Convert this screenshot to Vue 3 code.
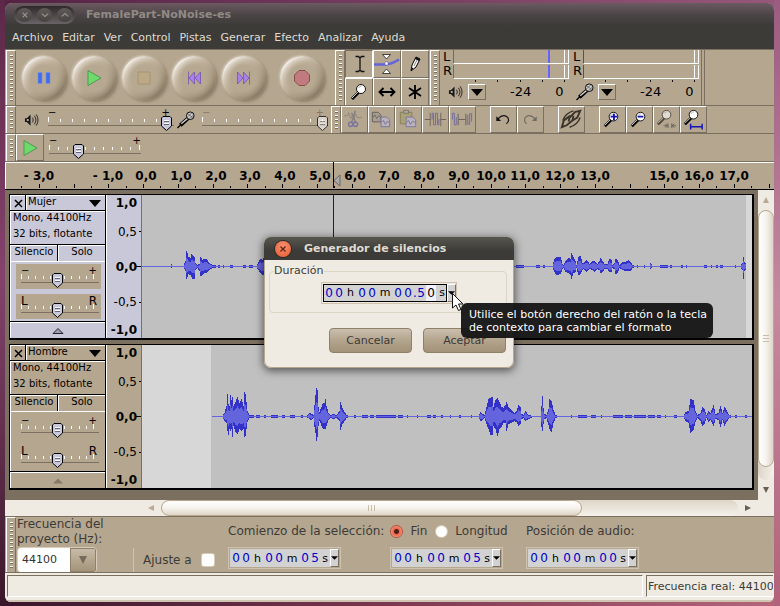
<script setup>
import { ref } from 'vue'

const menus = ['Archivo', 'Editar', 'Ver', 'Control', 'Pistas', 'Generar', 'Efecto', 'Analizar', 'Ayuda']

const meters = [
  { id: 'out', side: 'green', peak: true, label: 'Nivel de reproducción' },
  { id: 'in', side: 'red', peak: false, label: 'Nivel de grabación' }
]

const rulerLabels = [
  [-3, '- 3,0'], [-1, '- 1,0'], [0, '0,0'], [1, '1,0'], [2, '2,0'], [3, '3,0'], [4, '4,0'], [5, '5,0'],
  [6, '6,0'], [7, '7,0'], [8, '8,0'], [9, '9,0'], [10, '10,0'], [11, '11,0'], [12, '12,0'], [13, '13,0'],
  [15, '15,0'], [16, '16,0'], [17, '17,0']
]
const secondX = (s) => 138 + Math.round(s * 34.75)
const majors = Array.from({ length: 22 }, (_, i) => i - 3)

// Envelope keys: x, height above the axis, height below it
const mujer = [
  [142, 0, 0], [170, 0, 0], [171, 2, 1], [172, 0, 0], [183, 0, 0], [185, 5, 4], [186, 15, 12], [187, 13, 10], [188, 9, 7], [190, 8, 8],
  [191, 12, 10], [192, 11, 12], [194, 9, 12], [195, 3, 3], [197, 1, 1], [199, 2, 4], [200, 9, 9], [202, 6, 8],
  [204, 7, 6], [206, 7, 6], [208, 4, 4], [210, 2, 2], [213, 1, 1], [216, 0, 0], [256, 0, 0], [258, 4, 3],
  [260, 7, 6], [262, 6, 8], [264, 9, 7], [270, 3, 3], [552, 0, 0], [554, 7, 5], [556, 9, 8], [560, 9, 7],
  [562, 2, 2], [563, 1, 1], [565, 5, 5], [568, 8, 6], [570, 7, 8], [571, 13, 12], [573, 9, 6], [575, 5, 5],
  [576, 1, 1], [578, 9, 8], [580, 10, 7], [582, 3, 3], [583, 3, 2], [586, 6, 5], [588, 4, 3], [589, 2, 2],
  [592, 5, 3], [594, 5, 5], [597, 2, 2], [599, 5, 3], [600, 8, 6], [602, 5, 5], [604, 2, 2], [607, 2, 2],
  [609, 7, 5], [611, 6, 5], [612, 1, 1], [614, 3, 2], [615, 7, 7], [617, 6, 6], [619, 1, 1], [622, 4, 3],
  [625, 4, 4], [628, 6, 4], [630, 4, 4], [632, 1, 1], [635, 0, 0], [649, 0, 0], [650, 3, 2], [652, 0, 0],
  [740, 0, 0], [742, 3, 3], [743, 9, 12], [744, 4, 4], [746, 2, 2]
]
const hombre = [
  [212, 0, 0], [222, 0, 0], [224, 3, 4], [226, 10, 6], [227, 22, 14], [228, 12, 18], [229, 10, 12], [230, 21, 14],
  [231, 16, 12], [232, 19, 20], [233, 10, 9], [235, 14, 15], [237, 19, 17], [239, 13, 12], [241, 17, 14],
  [243, 10, 12], [244, 24, 20], [245, 22, 19], [246, 14, 12], [247, 5, 5], [249, 1, 1], [252, 1, 1], [254, 0, 0],
  [306, 0, 0], [309, 3, 2], [311, 2, 3], [313, 1, 1], [314, 11, 10], [315, 21, 16], [316, 28, 24], [317, 26, 20],
  [318, 9, 9], [319, 4, 4], [322, 12, 11], [324, 13, 12], [325, 17, 12], [326, 10, 9], [328, 3, 3], [330, 1, 1],
  [333, 2, 2], [336, 1, 1], [339, 5, 4], [340, 14, 13], [342, 8, 7], [344, 4, 4], [346, 1, 1], [349, 0, 0],
  [478, 0, 0], [480, 4, 4], [482, 2, 3], [484, 1, 1], [486, 9, 7], [488, 17, 12], [490, 18, 18], [492, 19, 18],
  [493, 9, 9], [495, 16, 12], [497, 18, 19], [499, 14, 12], [501, 9, 10], [503, 8, 6], [505, 11, 6], [506, 14, 14],
  [508, 9, 7], [511, 6, 6], [514, 3, 4], [516, 5, 5], [518, 11, 9], [520, 9, 7], [521, 2, 2], [523, 1, 1],
  [525, 5, 4], [528, 1, 2], [532, 0, 0], [540, 0, 0], [541, 10, 10], [542, 20, 14], [543, 8, 7], [544, 2, 2],
  [546, 1, 1], [548, 7, 8], [549, 17, 12], [551, 15, 15], [553, 6, 6], [555, 1, 1], [558, 0, 0], [683, 0, 0],
  [685, 4, 4], [688, 5, 6], [690, 17, 16], [693, 16, 13], [695, 5, 5], [697, 1, 1], [700, 3, 4], [702, 9, 9],
  [704, 7, 7], [706, 1, 1], [708, 5, 5], [710, 3, 3], [713, 11, 9], [715, 2, 2], [718, 3, 3], [720, 10, 10],
  [722, 3, 3], [724, 9, 9], [726, 6, 5], [728, 2, 2], [731, 0, 0], [752, 0, 0]
]
const mujerNoise = [[212, 4], [218, 2], [223, 1], [230, 3], [243, 3], [249, 4], [516, 8], [536, 4], [543, 2], [637, 1], [644, 1], [660, 8], [670, 2], [681, 2], [686, 1], [704, 3], [711, 1], [716, 2], [720, 3], [735, 1]]
const hombreNoise = [[256, 4], [264, 2], [271, 7], [282, 3], [290, 5], [301, 2], [354, 2], [362, 6], [370, 4], [376, 20], [398, 5], [407, 1], [417, 1], [427, 4], [433, 3], [441, 2], [450, 1], [459, 2], [471, 1], [571, 1], [578, 9], [591, 5], [601, 1], [613, 10], [625, 7], [634, 12], [648, 7], [657, 4], [665, 1], [674, 3], [735, 2], [745, 2]]

function envelope(keys, scale) {
  const up = []
  const down = []
  for (let k = 0; k < keys.length - 1; k++) {
    const [x0, a0, b0] = keys[k]
    const [x1, a1, b1] = keys[k + 1]
    for (let x = x0; x < x1; x++) {
      const t = (x - x0) / (x1 - x0)
      const a = Math.round((a0 + (a1 - a0) * t) * scale)
      const b = Math.round((b0 + (b1 - b0) * t) * scale)
      up.push(`${x},${71 - a} ${x + 1},${71 - a}`)
      down.unshift(`${x + 1},${72 + b} ${x},${72 + b}`)
    }
  }
  return [...up, ...down].join(' ')
}

const tracks = [
  { name: 'Mujer', selected: true, keys: mujer, noise: mujerNoise, from: 142, to: 746, cursor: 333 },
  { name: 'Hombre', selected: false, keys: hombre, noise: hombreNoise, from: 211, to: 752, cursor: null }
]

const kindOf = (c) => (/\d/.test(c) ? 'digit' : c === '.' ? 'dot' : `unit unit-${c}`)
const clock = (value) => [...value].map((c) => ({ c, kind: kindOf(c) }))
const start = clock('00h00m05s')
const end = clock('00h00m05s')
const audio = clock('00h00m00s')
const silence = clock('00h00m00.50s')

const rate = ref('44100')
const mode = ref('fin')
const snap = ref(false)
const vol = ref(98)
const rec = ref(100)
const speed = ref(30)
</script>

<template>
  <div class="desktop">
    <svg class="defs" aria-hidden="true">
      <symbol id="speaker" viewBox="0 0 16 14">
        <path d="M1 5h2l4-4v12l-4-4h-2z" fill="#1a1a1a" />
        <path d="M3 6h2v2h-2z" fill="#aaa" />
        <path d="M9 4.500q2 2.500 0 5M11 2.500q3.500 4.500 0 9M13 1q4 6 0 12" fill="none" stroke="#222" />
      </symbol>
      <symbol id="mic" viewBox="0 0 20 19">
        <path d="M1 18l4-4" stroke="#000" stroke-width="1.300" />
        <path d="M4 15L13 7" stroke="#000" stroke-width="4" />
        <path d="M5 13.500L12 7.500" stroke="#ccc" stroke-width="1.500" />
        <circle cx="14.500" cy="5" r="4" fill="#ccc" stroke="#000" />
        <path d="M12 3l5 4M12 6l4-4M14 8l4-4" stroke="#555" stroke-width=".8" />
      </symbol>
      <symbol id="lens" viewBox="0 0 20 20">
        <path d="M3 17l7-7" stroke="#000" stroke-width="3" />
        <path d="M3 16l6-6" stroke="#ccc" stroke-width="1" />
        <circle cx="12" cy="7" r="4.500" fill="#fff" stroke="#111" />
        <path d="M9.500 6q1-2 3-2" fill="none" stroke="#999" stroke-width=".8" />
      </symbol>
    </svg>

    <div class="window">
      <header class="titlebar">
        <div class="winbtns">
          <button aria-label="Cerrar"><svg viewBox="0 0 15 15"><path d="M5 5l5 5M10 5l-5 5" /></svg></button>
          <button aria-label="Minimizar"><svg viewBox="0 0 15 15"><path d="M4 6l3.500 3 3.500-3" /></svg></button>
          <button aria-label="Maximizar"><svg viewBox="0 0 15 15"><path d="M4 9l3.500-3 3.500 3" /></svg></button>
        </div>
        <h1>FemalePart-NoNoise-es</h1>
      </header>

      <nav class="menubar">
        <a v-for="m in menus" :key="m" href="#">{{ m }}</a>
      </nav>

      <div class="toolrow row-a">
        <div class="grip"><i></i></div>
        <div class="transport">
          <button aria-label="Pausa"><svg viewBox="0 0 20 20"><path d="M4 4.500h4v11h-4zM12 4.500h4v11h-4z" fill="#3c6cf0" stroke="#7d90d8" stroke-width=".6" /></svg></button>
          <button aria-label="Reproducir"><svg viewBox="0 0 20 20"><path d="M4 2.500v15l13-7.500z" fill="#6cdb6c" stroke="#4a8a4a" stroke-width=".8" /></svg></button>
          <button aria-label="Detener"><svg viewBox="0 0 20 20"><path d="M4 4h12v12h-12z" fill="#bba985" stroke="#a79672" /></svg></button>
          <button aria-label="Ir al inicio"><svg viewBox="0 0 20 20"><path d="M4.500 3.500v13M10.500 4v12l-5.500-6zM16.500 4v12l-5.500-6z" fill="#ab80ea" stroke="#7353b0" stroke-width=".8" /></svg></button>
          <button aria-label="Ir al final"><svg viewBox="0 0 20 20"><path d="M15.500 3.500v13M3.500 4v12l5.500-6zM9.500 4v12l5.500-6z" fill="#ab80ea" stroke="#7353b0" stroke-width=".8" /></svg></button>
          <button class="record" aria-label="Grabar"><svg viewBox="0 0 20 20"><path d="M7 2.500h6l4.500 4.500v6l-4.500 4.500h-6l-4.500-4.500v-6z" fill="#c17b7e" stroke="#8a4d4f" stroke-linejoin="round" /></svg></button>
        </div>
        <div class="grip"><i></i></div>
        <div class="tools">
          <button class="pressed" aria-label="Selección"><svg viewBox="0 0 26 26"><path d="M9.500 5.500h3l1.500 1.500 1.500-1.500h3M9.500 20.500h3l1.500-1.500 1.500 1.500h3M14 7v12" fill="none" stroke="#111" stroke-width="1.300" /></svg></button>
          <button aria-label="Envolvente"><svg viewBox="0 0 26 26"><path d="M0 13.500h11q6 0 14-5" fill="none" stroke="#6464dc" stroke-width="2.500" /><path d="M8.500 3.500h8l-4 4.500zM8.500 22.500h8l-4-4.500z" fill="#fff" stroke="#222" stroke-width=".8" /><path d="M11 11h3v3h-3z" fill="#fff" stroke="#55c" stroke-width=".5" /></svg></button>
          <button aria-label="Dibujo"><svg viewBox="0 0 26 26"><path d="M9 20l1-6 4-8 4 2-4 8z" fill="#fff" stroke="#000" /><path d="M9 20l.5-4 2 1.500zM14 6l4 2-1 2-4-2z" fill="#111" /><path d="M12 15l3-6" stroke="#888" /></svg></button>
          <button aria-label="Ampliación"><svg viewBox="0 0 26 26"><use href="#lens" x="3" y="3" width="20" height="20" /></svg></button>
          <button aria-label="Desplazamiento"><svg viewBox="0 0 26 26"><path d="M6 13h14M9.500 9l-4 4 4 4M16.500 9l4 4-4 4" fill="none" stroke="#000" stroke-width="1.800" /></svg></button>
          <button aria-label="Multiherramienta"><svg viewBox="0 0 26 26"><path d="M13 6v14M7 9l12 8M19 9l-12 8" stroke="#000" stroke-width="1.800" /></svg></button>
        </div>
        <div class="grip"><i></i></div>
        <div class="meters">
          <div v-for="m in meters" :key="m.id" class="meter" role="img" :aria-label="m.label">
            <div class="lr"><span>L</span><span>R</span></div>
            <div class="bars">
              <div v-for="c in 2" :key="c" class="bar" :class="m.side"><b v-if="m.peak"></b></div>
              <svg class="db"><path d="M22.500 0v4M44.500 0v2M67.500 0v4M89.500 0v2M111.500 0v4" stroke="#111" /></svg>
            </div>
            <div class="scale">
              <svg v-if="m.peak" class="ic-spk"><use href="#speaker" /></svg>
              <svg v-else class="ic-mic"><use href="#mic" /></svg>
              <button class="drop" :aria-label="m.label"><svg viewBox="0 0 12 7"><path d="M0 0h12l-6 7z" /></svg></button>
              <span class="m24">-24</span><span>0</span>
            </div>
          </div>
        </div>
      </div>

      <div class="toolrow row-b">
        <div class="grip"><i></i></div>
        <div class="mixer">
          <svg class="ic-spk"><use href="#speaker" /></svg>
          <label class="slider long">
            <span class="ends"><b>−</b><b>+</b></span>
            <svg class="ticks"><rect v-for="t in 11" :key="t" :x="(t - 1) * 12" :y="t === 1 ? 0 : 2" width="1" :height="t === 1 ? 5 : 3" /></svg>
            <input v-model="vol" type="range" aria-label="Volumen de salida">
          </label>
          <svg class="ic-mic"><use href="#mic" /></svg>
          <label class="slider long off">
            <span class="ends"><b>−</b><b>+</b></span>
            <svg class="ticks"><rect v-for="t in 11" :key="t" :x="(t - 1) * 12" :y="t === 1 ? 0 : 2" width="1" :height="t === 1 ? 5 : 3" /></svg>
            <input v-model="rec" type="range" aria-label="Volumen de entrada" disabled>
          </label>
        </div>
        <div class="grip"><i></i></div>
        <div class="edits">
          <button class="dim" aria-label="Cortar"><svg viewBox="0 0 26 26"><path d="M2 9h4l1-3 2 6 2-4 2 4 1-5 2 4h5" fill="none" stroke="#777" /><path d="M14 4l-4 12M10 6l4 10" stroke="#667" stroke-width="1.500" /><circle cx="9" cy="18" r="2.200" fill="none" stroke="#55a" stroke-width="1.500" /><circle cx="14" cy="18" r="2.200" fill="none" stroke="#55a" stroke-width="1.500" /></svg></button>
          <button class="dim" aria-label="Copiar"><svg viewBox="0 0 26 26"><path d="M3.500 5.500h6l3 3v7h-9z" fill="#999" stroke="#333" /><path d="M4 11l2-3 2 4 2-3 2 2" fill="none" stroke="#444" /><path d="M12.500 10.500h6l3 3v7h-9z" fill="#bcbcd6" stroke="#55a" /><path d="M13 16l2-2 2 4 2-3 2 1" fill="none" stroke="#55a" /></svg></button>
          <button class="dim" aria-label="Pegar"><svg viewBox="0 0 26 26"><path d="M4.500 5.500h12v12h-12z" fill="#a3a166" stroke="#66663a" /><path d="M8 3.500h5v3h-5z" fill="#aaa" stroke="#555" /><path d="M10.500 10.500h7l3 3v7h-10z" fill="#bcbcd6" stroke="#55a" /><path d="M11 16l2-2 2 4 2-3 3 1" fill="none" stroke="#55a" /></svg></button>
          <button class="dim" aria-label="Recortar"><svg viewBox="0 0 26 26"><path d="M2 13h6M18 13h6" stroke="#333" /><path d="M7.500 6v14M18.500 6v14" stroke="#444" /><path d="M9.500 13v-6.500h1.500v12h2v-12h2v12h1.500v-6" fill="none" stroke="#44a" /></svg></button>
          <button class="dim" aria-label="Silenciar"><svg viewBox="0 0 26 26"><path d="M8.500 7v12M16.500 7v12M9 13h7" stroke="#333" fill="none" /><path d="M2.500 13v-6.500h2v12h2v-8M18.500 8v10h2v-11h2v8" fill="none" stroke="#44a" /></svg></button>
          <button class="gap" aria-label="Deshacer"><svg viewBox="0 0 26 26"><path d="M7 12.500q6-6 10.500-1.500 2 4-1.500 6.500" fill="none" stroke="#111" stroke-width="1.200" /><path d="M5.500 9.500v5h5z" fill="#111" /></svg></button>
          <button class="dim" aria-label="Rehacer"><svg viewBox="0 0 26 26"><path d="M18 12.500q-6-6-10.500-1.500-2 4 1.500 6.500" fill="none" stroke="#444" stroke-width="1.200" /><path d="M19.500 9.500v5h-5z" fill="#444" /></svg></button>
          <button class="gap" aria-label="Enlazar pistas"><svg viewBox="0 0 26 26"><g fill="none" stroke="#3b342b" stroke-width="2"><path d="M14 14l5-3 3-7-5 1-6 6-1 4" /><path d="M15 10l-1 5-6 5-5 2 2-7 7-5" transform="translate(0 -1)" /><path d="M4 14q3-8 11-10M22 11q-3 8-11 10" stroke-width="1.500" /></g></svg></button>
          <button class="gap" aria-label="Acercar"><svg viewBox="0 0 26 26"><use href="#lens" x="2" y="3" width="20" height="20" /><path d="M11 10h7M14.500 7v7" stroke="#1414b4" stroke-width="2" /></svg></button>
          <button aria-label="Alejar"><svg viewBox="0 0 26 26"><use href="#lens" x="2" y="3" width="20" height="20" /><path d="M11 10h6" stroke="#1414b4" stroke-width="2" /></svg></button>
          <button class="dim" aria-label="Ajustar selección"><svg viewBox="0 0 26 26"><use href="#lens" x="1" y="1" width="20" height="20" /><path d="M10 19.500h4.500M18.500 19.500h4.500M14.500 17v5M18.500 17v5M12 17.500l2 2-2 2M21 17.500l-2 2 2 2" fill="none" stroke="#333" /></svg></button>
          <button aria-label="Ajustar proyecto"><svg viewBox="0 0 26 26"><use href="#lens" x="1" y="1" width="20" height="20" /><path d="M10 20.500h12M10 17.500v6M22 17.500v6" stroke="#1414b4" stroke-width="1.500" /></svg></button>
        </div>
      </div>

      <div class="toolrow row-c">
        <div class="grip"><i></i></div>
        <button class="playspeed" aria-label="Reproducir a velocidad"><svg viewBox="0 0 20 20"><path d="M4 2.500v15l13-7.500z" fill="#6cdb6c" stroke="#4a8a4a" stroke-width=".8" /></svg></button>
        <label class="slider speed">
          <span class="ends"><b>−</b><b>+</b></span>
          <svg class="ticks"><rect v-for="t in 11" :key="t" :x="(t - 1) * 9" :y="t === 1 || t === 11 ? 0 : 2" width="1" :height="t === 1 || t === 11 ? 5 : 3" /></svg>
          <input v-model="speed" type="range" aria-label="Velocidad de reproducción">
        </label>
      </div>

      <div class="ruler">
        <svg>
          <g fill="#000">
            <rect v-for="n in majors" :key="n" :x="secondX(n)" y="22" width="1" height="4" />
            <rect v-for="n in majors" :key="'h' + n" :x="secondX(n - 0.5)" y="24" width="1" height="2" />
          </g>
          <text v-for="l in rulerLabels" :key="l[1]" :x="secondX(l[0]) + (l[0] < 0 || l[0] > 9 ? 0 : 3)" y="18">{{ l[1] }}</text>
          <path d="M328.500 0v26" stroke="#000" />
          <path d="M335 13v11l-6-5.500z" fill="#aaa" stroke="#666" />
        </svg>
      </div>

      <main class="work">
        <div class="canvas">
          <section v-for="t in tracks" :key="t.name" class="track" :class="{ selected: t.selected }">
            <div class="panel">
              <div class="prow head">
                <button class="cell x" aria-label="Cerrar pista"><svg viewBox="0 0 9 9"><path d="M1 1l7 7M8 1l-7 7" stroke="#000" stroke-width="1.500" /></svg></button>
                <button class="cell name">{{ t.name }}<svg viewBox="0 0 12 7"><path d="M0 0h12l-6 7z" /></svg></button>
              </div>
              <div class="cell info"><span>Mono, 44100Hz</span><span>32 bits, flotante</span></div>
              <div class="prow mute">
                <button class="cell">Silencio</button>
                <button class="cell">Solo</button>
              </div>
              <div class="cell knobs">
                <label v-for="k in ['gain', 'pan']" :key="k" class="slider small" :class="k">
                  <span class="ends"><b>{{ k === 'gain' ? '−' : 'L' }}</b><b>{{ k === 'gain' ? '+' : 'R' }}</b></span>
                  <svg class="ticks"><rect v-for="n in 11" :key="n" :x="Math.round((n - 1) * 7.2)" :y="n === 1 || n === 11 ? 0 : 2" width="1" :height="n === 1 || n === 11 ? 5 : 3" /></svg>
                  <input type="range" value="48" :aria-label="(k === 'gain' ? 'Ganancia ' : 'Balance ') + t.name">
                </label>
              </div>
              <button class="cell fold" aria-label="Contraer"><svg viewBox="0 0 12 6"><path d="M1 5.500h10l-5-5z" /></svg></button>
            </div>
            <div class="vruler">
              <b>1,0</b><span>0,5</span><b>0,0</b><span>-0,5</span><b>-1,0</b>
              <svg viewBox="0 0 5 143"><path d="M3 36.500h2M0 71.500h5M3 107.500h2" stroke="#000" /></svg>
            </div>
            <svg class="wave" viewBox="142 0 610 143" preserveAspectRatio="none" shape-rendering="crispEdges">
              <rect x="142" width="610" height="143" fill="#d7d7d7" />
              <rect :x="t.from" :width="t.to - t.from" height="143" fill="#c0c0c0" />
              <polygon :points="envelope(t.keys, 1)" fill="#3232c8" />
              <rect v-for="(n, i) in t.noise" :key="i" :x="n[0]" y="70" :width="n[1]" height="3" fill="#3232c8" />
              <polygon :points="envelope(t.keys.map(([x, a, b]) => [x, a > 1 ? a : -1, b > 1 ? b : -1]), 0.5)" fill="#6464dc" />
              <rect v-if="t.cursor" :x="t.cursor" width="1" height="143" fill="#222" />
            </svg>
          </section>
        </div>
        <div class="vscroll">
          <svg viewBox="0 0 8 8"><path d="M4 1l3 6h-6z" fill="#b8aa94" /></svg>
          <div class="trough"><div class="thumb"><i></i></div></div>
          <svg viewBox="0 0 8 8"><path d="M4 7l3-6h-6z" fill="#666055" /></svg>
        </div>
      </main>

      <div class="hscroll">
        <svg viewBox="0 0 8 8"><path d="M1 4l6-3v6z" fill="#b8aa94" /></svg>
        <div class="trough"><div class="thumb"><i></i></div></div>
        <svg viewBox="0 0 8 8"><path d="M7 4l-6-3v6z" fill="#666055" /></svg>
      </div>

      <div class="selbar">
        <div class="grip"><i></i></div>
        <div class="rate">
          <label for="rate">Frecuencia del proyecto (Hz):</label>
          <div class="combo">
            <select id="rate" v-model="rate"><option>44100</option></select>
            <span class="comboarrow"><svg viewBox="0 0 8 8"><path d="M0 0h8l-4 8z" fill="#756b5c" /></svg></span>
          </div>
        </div>
        <div class="snap"><label for="snap">Ajuste a</label><input id="snap" v-model="snap" type="checkbox"></div>
        <div class="range">
          <div class="rangelabels">
            <span>Comienzo de la selección:</span>
            <label><input v-model="mode" type="radio" name="mode" value="fin">Fin</label>
            <label><input v-model="mode" type="radio" name="mode" value="len">Longitud</label>
          </div>
          <div class="times">
            <div v-for="(v, i) in [start, end]" :key="i" class="time" role="group" :aria-label="i ? 'Fin' : 'Comienzo'">
              <span class="field"><span v-for="(p, j) in v" :key="j" :class="p.kind">{{ p.c }}</span></span>
              <button class="tdrop" aria-label="Formato"><svg viewBox="0 0 8 4"><path d="M0 0h8l-4 4z" /></svg></button>
            </div>
          </div>
        </div>
        <div class="audio">
          <span class="alabel">Posición de audio:</span>
          <div class="time" role="group" aria-label="Posición de audio">
            <span class="field"><span v-for="(p, j) in audio" :key="j" :class="p.kind">{{ p.c }}</span></span>
            <button class="tdrop" aria-label="Formato"><svg viewBox="0 0 8 4"><path d="M0 0h8l-4 4z" /></svg></button>
          </div>
        </div>
      </div>

      <footer class="status">
        <div class="scell"></div>
        <div class="scell real">Frecuencia real: 44100</div>
      </footer>
    </div>

    <div class="dialog" role="dialog" aria-labelledby="dlg-title">
      <header>
        <button aria-label="Cerrar"><svg viewBox="0 0 16 16"><path d="M5.500 5.500l5 5M10.500 5.500l-5 5" stroke="#5b2514" stroke-width="1.300" /></svg></button>
        <h2 id="dlg-title">Generador de silencios</h2>
      </header>
      <fieldset>
        <legend>Duración</legend>
        <div class="time wide">
          <span class="field"><span v-for="(p, j) in silence" :key="j" :class="[p.kind, { focus: j === 10 }]">{{ p.c }}</span></span>
          <button class="tdrop" aria-label="Formato"><svg viewBox="0 0 8 4"><path d="M0 0h8l-4 4z" /></svg></button>
        </div>
      </fieldset>
      <div class="actions">
        <button>Cancelar</button>
        <button>Aceptar</button>
      </div>
      <div class="tip" role="tooltip">Utilice el botón derecho del ratón o la tecla<br>de contexto para cambiar el formato</div>
      <svg class="pointer" viewBox="0 0 13 20"><path d="M1.500 1.500v14.500l3.500-3 2.500 5.500 2.500-1-2.500-5.500h4.500z" fill="#fff" stroke="#111" /></svg>
    </div>
  </div>
</template>

<style>
body { margin: 0; }
* { box-sizing: border-box; }
</style>

<style scoped>
.desktop {
  --tan: #b5a68f;
  --dark: #7b7060;
  --cream: #efebe3;
  position: relative;
  min-height: 100vh;
  padding: 3px 6px 4px 5px;
  display: flex;
  flex-direction: column;
  overflow: hidden;
  font: 11px/14px "DejaVu Sans", sans-serif;
  color: #3c3b37;
  background:
    linear-gradient(180deg, #9a5c80, #c48aa0 50%, #b0637a) right / 6px 100% no-repeat,
    linear-gradient(180deg, #5c2848, #84426c 45%, #6b3556 65%, #3a1728) left / 5px 100% no-repeat,
    linear-gradient(90deg, #552244, #96587a) top / 100% 50% no-repeat,
    linear-gradient(90deg, #38152b, #7c3850 50%, #b5667a) bottom / 100% 50% no-repeat;
}
button { font: inherit; color: inherit; padding: 0; margin: 0; border: 0; background: none; display: grid; place-items: center; }
svg { display: block; }
.defs { position: absolute; width: 0; height: 0; }
.window { flex: 1; display: flex; flex-direction: column; min-width: 0; border-radius: 7px 7px 6px 6px; overflow: hidden; background: var(--tan); }

.titlebar { height: 23px; display: flex; align-items: center; gap: 11px; padding-left: 9px; background: linear-gradient(#6b5a60, #4a4446 55%, #3c3b37); }
.winbtns { display: flex; gap: 5px; padding: 2px 3px; border-radius: 10px; background: linear-gradient(#2f292a, #6a6365); }
.winbtns button { width: 15px; height: 14px; border-radius: 50%; background: linear-gradient(#5f5a59, #474341); }
.winbtns svg { width: 14px; height: 14px; fill: none; stroke: #98928c; stroke-width: 1.3; }
h1, h2 { margin: 0; font-size: 11px; line-height: 14px; font-weight: bold; }
h1 { color: #908a85; }
.menubar { height: 23px; display: flex; align-items: center; gap: 9px; padding-left: 7px; background: #3c3b37; }
.menubar a { color: #dfdbd2; text-decoration: none; }

.toolrow { display: flex; border-top: 1px solid var(--dark); overflow: hidden; flex: none; }
.row-a { height: 56px; }
.row-b, .row-c { height: 28px; }
.grip { width: 10px; flex: none; padding: 4px 2px 4px 3px; border: 1px solid #fff; border-right-color: var(--dark); border-bottom: 0; margin-left: 1px; }
.grip i { display: block; height: 100%; background: repeating-linear-gradient(#fff 0 1px, var(--dark) 1px 2px, transparent 2px 4px); }
.transport { width: 318px; display: flex; align-items: center; padding-left: 6px; gap: 6px; }
.transport button {
  width: 44px; height: 44px; flex: none; border-radius: 50%;
  background: radial-gradient(circle, #b7a891 40%, rgba(183, 168, 145, 0) 68%), linear-gradient(135deg, #f6f2ec 14%, #c6b8a3 40%, #ab9b83 62%, #857762 86%);
  box-shadow: -1px -1px 2px rgba(255, 255, 255, .35), 2px 2px 3px rgba(95, 80, 60, .45);
}
.transport .record { margin-left: 8px; }
.transport svg { width: 20px; height: 20px; }
.tools { display: grid; grid-template-columns: repeat(3, 28px); grid-auto-rows: 28px; }
.tools button, .edits button, .playspeed { border: 1px solid; border-color: #fff var(--dark) var(--dark) #fff; }
.tools .pressed { border-color: var(--dark) #fff #fff var(--dark); }
.tools svg { width: 26px; height: 26px; }
.meters { display: flex; gap: 2px; padding-left: 3px; border-right: 1px solid var(--dark); width: 262px; box-shadow: 2px 0 0 var(--tan), 3px 0 0 var(--dark); }
.meter { width: 128px; display: grid; grid-template-columns: 10px 116px; grid-template-rows: 32px 22px; color: #000; font-size: 13px; line-height: 14px; }
.lr { display: grid; align-content: start; }
.bars { display: flex; flex-direction: column; gap: 1px; }
.bar { height: 14px; flex: none; position: relative; border-right: 1px solid #fff; border-bottom: 1px solid #fff; border-left: 1px solid #3c8c3c; background: linear-gradient(90deg, #fff, #fff) right 3px top / 1px 100% no-repeat; }
.bar.red { border-left-color: #8c3c3c; }
.bar b { position: absolute; left: 94px; top: 0; bottom: 0; width: 2px; background: #6464ff; }
.db { width: 116px; height: 4px; }
.scale { grid-column: 1 / -1; display: flex; align-items: center; padding-left: 5px; height: 18px; margin-top: 1px; }
.ic-spk { width: 15px; height: 14px; flex: none; }
.ic-mic { width: 20px; height: 18px; flex: none; }
.scale .ic-mic { margin-left: -3px; }
.drop { width: 18px; height: 16px; margin-left: 5px; border: 1px solid; border-color: #fff var(--dark) var(--dark) #fff; }
.meter:nth-child(2) .drop { margin-left: 3px; }
.drop svg { width: 12px; height: 7px; }
.m24 { margin: 0 24px 0 24px; }

.mixer { width: 314px; display: flex; align-items: center; padding-left: 8px; }
.mixer .ic-mic { margin: 0 6px 0 2px; }
.slider { display: grid; grid-template-columns: 100%; grid-template-rows: 9px 14px; flex: none; color: #000; }
.slider.long { width: 126px; margin-left: 9px; }
.slider.long.off { margin-left: 0; }
.slider .ends { display: flex; justify-content: space-between; font-size: 10px; line-height: 9px; }
.slider .ends b { font-weight: normal; }
.long .ends { padding-right: 4px; }
.slider .ticks { grid-row: 2; grid-column: 1; width: 100%; height: 9px; fill: #fff; border-bottom: 1px solid var(--dark); margin-top: 0; }
.slider input { grid-row: 2; grid-column: 1; appearance: none; background: none; margin: 0; width: 100%; height: 14px; margin-top: -1px; }
.slider input::-webkit-slider-thumb {
  appearance: none; width: 11px; height: 15px; border: 0;
  background: url("data:image/svg+xml,%3Csvg xmlns='http://www.w3.org/2000/svg' viewBox='0 0 11 15'%3E%3Cpath d='M2 .500h7l1.500 1.500v8l-5 4.500-5-4.500v-8z' fill='%23c8c8dc' stroke='%23000'/%3E%3Cpath d='M3 4.500h5M3 7.500h5' stroke='%23fff'/%3E%3Cpath d='M3 5.500h5M3 8.500h5' stroke='%23667'/%3E%3C/svg%3E") center / 100% 100% no-repeat;
}
.off .ends { color: #85796a; }
.off input::-webkit-slider-thumb { filter: grayscale(1) brightness(1.15) opacity(.7); }
.edits { display: flex; }
.edits button { width: 27px; height: 27px; flex: none; }
.edits .gap { margin-left: 14px; }
.edits svg { width: 25px; height: 25px; }
.dim svg { opacity: .6; }
.playspeed { width: 28px; height: 27px; }
.playspeed svg { width: 22px; height: 20px; }
.slider.speed { width: 92px; margin: 2px 0 0 5px; }

.ruler { flex: none; height: 29px; border-top: 1px solid var(--dark); border-bottom: 1px solid #000; box-shadow: inset 1px 1px 0 #fff; }
.ruler svg { width: 100%; height: 27px; }
.ruler text { font: bold 12px "DejaVu Sans", sans-serif; text-anchor: middle; fill: #000; }

.work { flex: 1; display: flex; min-height: 0; background: var(--dark); }
.canvas { flex: 1; min-width: 0; padding: 4px; display: flex; flex-direction: column; gap: 4px; }
.track { height: 146px; flex: none; display: grid; grid-template-columns: 96px 36px 1fr; border: 1px solid #000; border-width: 1px 2px 2px 1px; --face: #b5a68f; background: #000; }
.track.selected { --face: #c9c8d8; }
.panel { display: flex; flex-direction: column; gap: 1px; color: #000; font-size: 10px; line-height: 12px; padding-right: 1px; }
.cell { background: var(--face); border: 1px solid #fff; border-right: 0; border-bottom: 0; }
.prow { display: grid; gap: 1px; }
.head { grid-template-columns: 15px 1fr; height: 15px; }
.mute { grid-template-columns: 1fr 1fr; height: 15px; }
.x svg { width: 9px; height: 9px; }
.name { display: flex; align-items: center; justify-content: space-between; padding: 0 4px 2px 1px; }
.name svg { width: 12px; height: 7px; margin-top: 2px; }
.mute .cell { padding-bottom: 3px; }
.info { height: 33px; display: flex; flex-direction: column; gap: 4px; padding-left: 2px; }
.knobs { height: 60px; padding: 2px 4px 2px 5px; display: grid; align-content: start; gap: 5px; }
.slider.small { padding: 3px 2px 0 5px; height: 25px; background: var(--tan); grid-template-rows: 7px 14px; }
.small .ends { line-height: 7px; padding-right: 2px; }
.pan .ends { font-size: 12px; line-height: 9px; }
.small input { width: 76px; }
.fold { flex: 1; }
.fold svg { width: 12px; height: 6px; fill: #9b9bb8; stroke: #000; stroke-width: .8; }
.track:not(.selected) .fold svg { fill: #857a68; stroke: none; }
.vruler { position: relative; background: var(--face); border-left: 1px solid #fff; border-right: 1px solid var(--dark); color: #000; font-size: 12px; line-height: 14px; display: grid; grid-template-rows: 15px 43px 28px 42px 14px; align-items: center; justify-items: end; padding-right: 4px; }
.vruler svg { position: absolute; right: 0; top: 0; width: 5px; height: 143px; }
.wave { width: 100%; height: 143px; }

.vscroll { width: 16px; flex: none; background: var(--cream); display: flex; flex-direction: column; align-items: center; gap: 6px; padding: 6px 0; }
.vscroll svg, .hscroll svg { width: 8px; height: 8px; flex: none; }
.trough { background: linear-gradient(90deg, #ddd5c7, #f4f1ea); border-radius: 8px; }
.vscroll .trough { width: 16px; flex: 1; }
.thumb { border: 1px solid #b8a98f; border-radius: 8px; display: grid; place-items: center; }
.vscroll .thumb { height: 95%; background: linear-gradient(90deg, #fff, #f6f3ee 50%, #ddd5c6); }
.vscroll .thumb i { width: 6px; height: 7px; background: repeating-linear-gradient(#c9bda8 0 1px, transparent 1px 3px); }
.hscroll { height: 16px; flex: none; background: var(--cream); display: flex; align-items: center; gap: 6px; padding: 0 22px 0 142px; }
.hscroll .trough { flex: 1; height: 16px; background: linear-gradient(#ddd5c7, #f4f1ea); }
.hscroll .thumb { width: 73%; height: 16px; background: linear-gradient(#fff, #f6f3ee 50%, #ddd5c6); }
.hscroll .thumb i { width: 7px; height: 6px; background: repeating-linear-gradient(90deg, #c9bda8 0 1px, transparent 1px 3px); }

.selbar { flex: none; height: 56px; border-top: 1px solid var(--dark); display: flex; overflow: hidden; font-size: 12px; line-height: 15px; }
.rate { width: 117px; padding-left: 1px; flex: none; }
.rate label { display: block; width: 100px; height: 30px; }
.combo { display: flex; width: 80px; height: 26px; border: 1px solid #d8cdbb; border-radius: 4px; overflow: hidden; }
.combo select { appearance: none; flex: 1; min-width: 0; border: 0; padding: 0 0 2px 4px; margin: 0; background: #fff; color: #333; font: 11px "DejaVu Sans", sans-serif; }
.comboarrow { width: 26px; display: grid; place-items: center; background: linear-gradient(#c8bba7, #a39479); border: 1px solid #8f8169; }
.comboarrow svg { width: 8px; height: 8px; }
.snap { flex: none; width: 95px; height: 24px; margin-top: 31px; padding-left: 9px; border-left: 1px solid #cfc3b0; display: flex; align-items: center; gap: 10px; }
.snap input { appearance: none; width: 12px; height: 12px; margin: 0; background: #fff; border-radius: 2px; box-shadow: 0 0 0 1px #d5cab9; }
.range { flex: none; width: 291px; }
.rangelabels { display: flex; align-items: center; height: 28px; }
.rangelabels label { display: flex; align-items: center; gap: 8px; margin-left: 7px; }
.rangelabels label + label { margin-left: 9px; }
.rangelabels input { appearance: none; width: 11px; height: 11px; margin: 0; border-radius: 50%; background: #fff; box-shadow: 0 0 0 1px #d5cab9; }
.rangelabels input:checked { background: radial-gradient(circle, #4a2018 0 2px, #f0664c 3px, #f9a28c); box-shadow: 0 0 0 1px #b0503c; }
.times { display: flex; gap: 49px; margin-top: 2px; }
.audio { flex: 1; }
.alabel { display: flex; height: 28px; align-items: center; padding-left: 7px; }
.audio .time { margin: 2px 0 0 7px; }
.time { display: flex; width: 113px; height: 22px; padding: 1px; border: 1px solid #cfc3b0; color: #000; font-size: 12px; }
.field { flex: 1; display: flex; align-items: center; background: #d2d2d2; padding-left: 1px; }
.digit { width: 10px; text-align: center; color: #0000c8; }
.unit { font-size: 11px; text-align: center; width: 13px; }
.unit-m { width: 16px; }
.unit-s { width: 10px; }
.dot { width: 3px; color: #0000c8; }
.tdrop { width: 9px; background: #d2d2d2; border: 1px solid; border-color: #fff var(--dark) var(--dark) #fff; }
.tdrop svg { width: 7px; height: 4px; }

.status { flex: none; height: 30px; border-top: 1px solid var(--dark); background: var(--cream); display: flex; gap: 3px; padding: 2px 1px 5px 2px; box-shadow: inset 0 -2px 0 #cfc4b2; }
.scell { flex: 1; border: 1px solid; border-color: var(--dark) #fff #fff var(--dark); }
.real { flex: none; width: 127px; padding: 4px 0 0 1px; overflow: hidden; white-space: nowrap; border-right: 0; }

.dialog { position: absolute; left: 264px; top: 237px; width: 250px; border-radius: 7px; background: var(--cream); box-shadow: 0 2px 8px 1px rgba(0, 0, 0, .55), inset 0 0 0 1px #b5a68f; }
.dialog header { height: 23px; display: flex; align-items: center; gap: 13px; padding-left: 11px; color: #dfdbd2; background: linear-gradient(#57564f, #3c3b37 60%); border-radius: 7px 7px 0 0; }
.dialog header button { width: 16px; height: 16px; border-radius: 50%; background: radial-gradient(circle at 50% 35%, #f89070, #e8592c); box-shadow: 0 0 0 1px #2a2927; }
.dialog header svg { width: 16px; height: 16px; }
fieldset { margin: 4px 7px 0 5px; padding: 4px 0 0 51px; height: 49px; border: 1px solid #dcd4c5; border-radius: 4px; min-width: 0; }
legend { padding: 0; margin-left: -47px; height: 14px; }
.wide { width: 136px; }
.wide .field { border: 1px solid #000; padding-left: 0; }
.wide .unit-s { width: 8px; margin-left: 2px; }
.focus { background: #f0f0ff; color: #000; height: 16px; line-height: 16px; }
.actions { display: flex; gap: 11px; justify-content: flex-end; padding: 15px 8px 15px; }
.actions button { width: 83px; height: 25px; border: 1px solid #8f8068; border-radius: 4px; background: linear-gradient(#cbbfae, #b3a48d 50%, #a29279); }
.tip { position: absolute; left: 197px; top: 66px; padding: 5px 6px 4px 8px; border-radius: 6px; white-space: nowrap; line-height: 13px; color: #fff; background: rgba(18, 18, 18, .94); }
.pointer { position: absolute; left: 187px; top: 55px; width: 13px; height: 20px; }
</style>
